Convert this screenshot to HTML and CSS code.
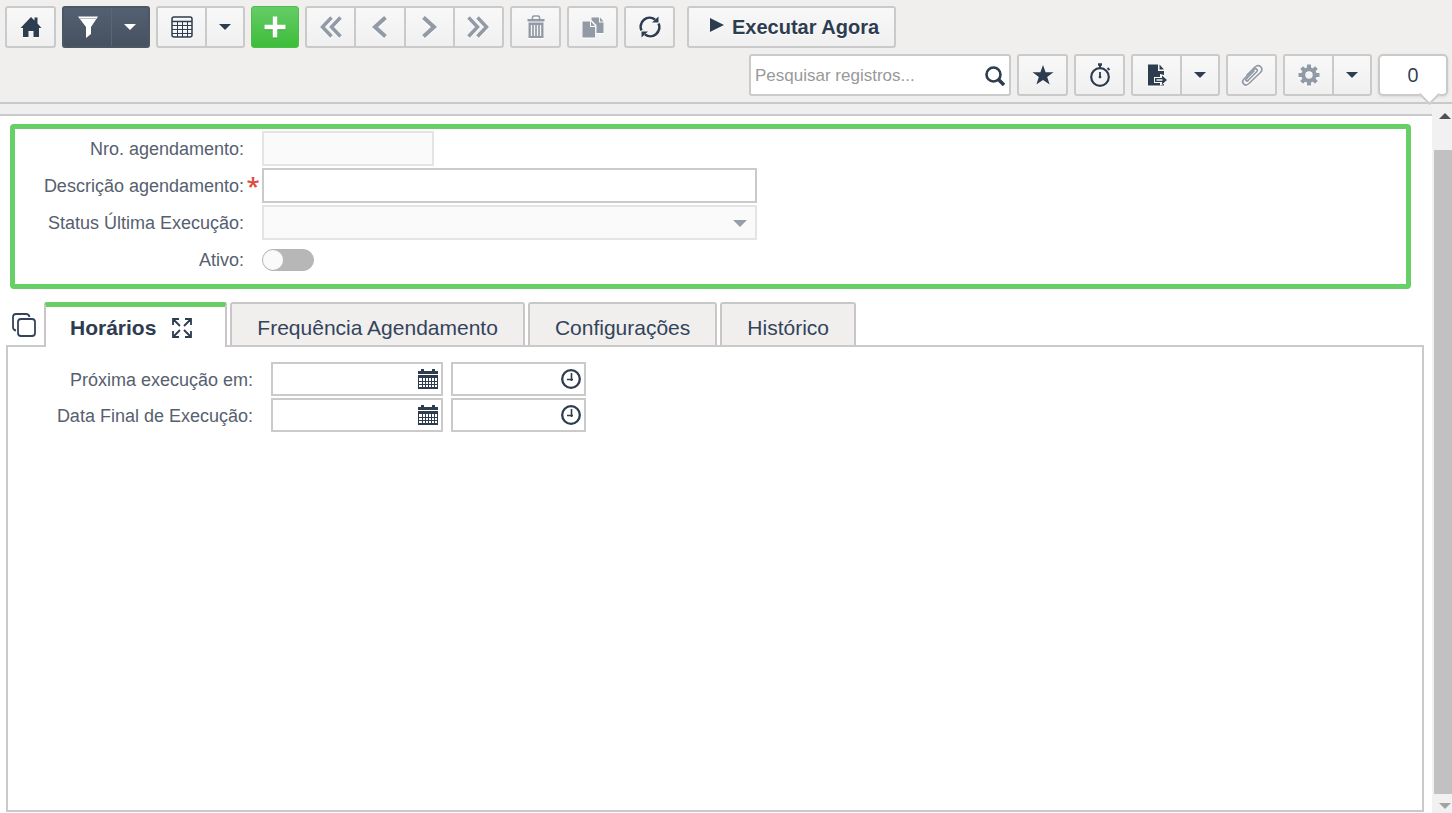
FILE: index.html
```html
<!DOCTYPE html>
<html lang="pt-BR">
<head>
    <meta charset="UTF-8">
    <meta name="viewport" content="width=device-width, initial-scale=1.0">
    <title>Agendamento</title>
    <link rel="stylesheet" href="styles.css">
</head>
<body>
    <!-- Shared icons -->
    <svg class="sprite" aria-hidden="true">
        <symbol id="caret" viewBox="0 0 12 6"><path d="M0 0h12L6 6z" fill="currentColor"/></symbol>
        <symbol id="calendar" viewBox="0 0 20 20">
            <path d="M0 2h3V0h3v2h8V0h3v2h3v3H0z" fill="currentColor"/>
            <path d="M0 6h20v14H0z" fill="currentColor"/>
            <path d="M1 9h3v3H1zm4 0h2v3H5zm3 0h2v3H8zm3 0h2v3h-2zm3 0h2v3h-2zm3 0h2v3h-2zM1 13h3v2H1zm4 0h2v2H5zm3 0h2v2H8zm3 0h2v2h-2zm3 0h2v2h-2zm3 0h2v2h-2zM1 16h3v2H1zm4 0h2v2H5zm3 0h2v2H8zm3 0h2v2h-2zm3 0h2v2h-2zm3 0h2v2h-2z" fill="#fff"/>
        </symbol>
        <symbol id="clock" viewBox="0 0 20 20">
            <circle cx="10" cy="10" r="8.800" fill="none" stroke="currentColor" stroke-width="2.300"/>
            <path d="M10.500 4v8M6 10.500h6" fill="none" stroke="currentColor" stroke-width="1.600"/>
        </symbol>
    </svg>

    <header class="toolbar">
        <div class="toolbar-row">
            <div class="group">
                <button type="button" class="btn" aria-label="Início">
                    <svg class="icon" viewBox="0 0 22 22"><path d="M11 1l3.500 3.500V1.500h3V7.500l4 4.500H19v9h-5.500v-6h-5v6H3v-9H.5z" fill="currentColor"/></svg>
                </button>
            </div>
            <div class="group group-dark">
                <button type="button" class="btn" aria-label="Filtro">
                    <svg class="icon" viewBox="0 0 22 22"><path d="M1 .5h20l-7 10.500v7l-5 4V11z" fill="currentColor"/><path d="M3 2.500h16" stroke="#b9bec6" stroke-width="1"/></svg>
                </button>
                <button type="button" class="btn btn-caret" aria-label="Opções de filtro">
                    <svg class="caret"><use href="#caret"/></svg>
                </button>
            </div>
            <div class="group">
                <button type="button" class="btn" aria-label="Grade">
                    <svg class="icon" viewBox="0 0 22 22" fill="none" stroke="currentColor">
                        <rect x="1" y="1" width="20" height="20" rx="2" stroke-width="1.500"/>
                        <path d="M1 5.500h20" stroke-width="1.500"/>
                        <path d="M1 9.500h20M1 13.500h20M1 17.500h20M6.500 6v15M11.500 6v15M16.500 6v15" stroke-width="1"/>
                    </svg>
                </button>
                <button type="button" class="btn btn-caret" aria-label="Opções da grade">
                    <svg class="caret"><use href="#caret"/></svg>
                </button>
            </div>
            <button type="button" class="btn-add" aria-label="Novo">
                <svg class="icon" viewBox="0 0 22 22"><path d="M11 .5v21M.5 11h21" stroke="currentColor" stroke-width="4.500"/></svg>
            </button>
            <div class="group group-nav">
                <button type="button" class="btn" aria-label="Primeiro" disabled>
                    <svg class="icon" viewBox="0 0 22 22" fill="none" stroke="currentColor" stroke-width="3.500"><path d="M11.500 1.500L2.500 11l9 9.500M20.500 1.500L11.500 11l9 9.500"/></svg>
                </button>
                <button type="button" class="btn" aria-label="Anterior" disabled>
                    <svg class="icon" viewBox="0 0 22 22" fill="none" stroke="currentColor" stroke-width="4"><path d="M16.500 1.500L6 11l10.500 9.500"/></svg>
                </button>
                <button type="button" class="btn" aria-label="Próximo" disabled>
                    <svg class="icon" viewBox="0 0 22 22" fill="none" stroke="currentColor" stroke-width="4"><path d="M5.500 1.500L16 11 5.500 20.500"/></svg>
                </button>
                <button type="button" class="btn" aria-label="Último" disabled>
                    <svg class="icon" viewBox="0 0 22 22" fill="none" stroke="currentColor" stroke-width="3.500"><path d="M1.500 1.500l9 9.500-9 9.500M10.500 1.500l9 9.500-9 9.500"/></svg>
                </button>
            </div>
            <div class="group">
                <button type="button" class="btn" aria-label="Excluir" disabled>
                    <svg class="icon icon-lg" viewBox="0 0 24 24"><path d="M8.500 4V2.500Q8.500 1 10 1h4q1.500 0 1.500 1.500V4" fill="none" stroke="currentColor" stroke-width="1.600"/><path d="M3.500 4h17v2.500h-17zM4.500 7.500h15V23h-15z" fill="currentColor"/><path d="M7.500 10v11M10.500 10v11M13.500 10v11M16.500 10v11" stroke="#f4f4f4" stroke-width="1.300"/></svg>
                </button>
            </div>
            <div class="group">
                <button type="button" class="btn" aria-label="Duplicar" disabled>
                    <svg class="icon" viewBox="0 0 22 22" fill="currentColor"><path d="M9.500 1.500H17v5h4.500V17h-7V9l-5-5zM18 1.500l3.500 4H18z"/><path d="M.5 5.500H8v5.500h5v10.500H.5zM9 5.500l4 4.500H9z"/></svg>
                </button>
            </div>
            <div class="group">
                <button type="button" class="btn" aria-label="Atualizar">
                    <svg class="icon" viewBox="0 0 22 22"><path d="M2.500 14.500A9 9 0 0 1 16 3.500M19.500 7.500A9 9 0 0 1 6 18.500" fill="none" stroke="currentColor" stroke-width="2.600"/><path d="M13 6.500h6.500V.5zM9 15.500H2.500v6z" fill="currentColor"/></svg>
                </button>
            </div>
            <div class="group group-run">
                <button type="button" class="btn btn-run">
                    <svg class="play" viewBox="0 0 14 14"><path d="M0 0l14 7-14 7z" fill="currentColor"/></svg>
                    Executar Agora
                </button>
            </div>
        </div>

        <div class="toolbar-row toolbar-right">
            <div class="search">
                <input type="text" class="search-input" placeholder="Pesquisar registros..." aria-label="Pesquisar registros">
                <button type="button" class="search-btn" aria-label="Pesquisar">
                    <svg class="icon-sm" viewBox="0 0 20 20" fill="none" stroke="currentColor"><circle cx="8.500" cy="8.500" r="7" stroke-width="2.600"/><path d="M13 13l6 6" stroke-width="3.500"/></svg>
                </button>
            </div>
            <div class="group">
                <button type="button" class="btn" aria-label="Favorito">
                    <svg class="icon" viewBox="0 0 22 22"><path d="M11 1l2.600 7.300h7.900l-6.300 4.600 2.400 7.600L11 16l-6.600 4.500 2.400-7.600L.5 8.300h7.900z" fill="currentColor"/></svg>
                </button>
            </div>
            <div class="group">
                <button type="button" class="btn" aria-label="Cronômetro">
                    <svg class="icon icon-lg" viewBox="0 0 24 24" fill="none" stroke="currentColor"><circle cx="12" cy="14" r="8.800" stroke-width="2.200"/><path d="M12 9v6" stroke-width="1.800"/><path d="M10 1.500h4" stroke-width="2.500"/><path d="M12 2v3" stroke-width="2"/><path d="M19.500 5l2 2" stroke-width="1.800"/><circle cx="12" cy="14" r="1" fill="currentColor"/></svg>
                </button>
            </div>
            <div class="group">
                <button type="button" class="btn" aria-label="Exportar">
                    <svg class="icon" viewBox="0 0 22 22"><path d="M2 .5h10V7h6v4l-4-1v3H8v6h6v2.500H2zM13.500.5L18 5.500h-4.500z" fill="currentColor"/><path d="M9 14h7v-2.500l5 4.500-5 4.500V18H9z" fill="currentColor"/><path d="M10.500 16h6" stroke="#f4f4f4" stroke-width="1.500"/><path d="M14 21.500h4V20z" fill="currentColor"/></svg>
                </button>
                <button type="button" class="btn btn-caret" aria-label="Opções de exportação">
                    <svg class="caret"><use href="#caret"/></svg>
                </button>
            </div>
            <div class="group">
                <button type="button" class="btn" aria-label="Anexos" disabled>
                    <svg class="icon icon-lg" viewBox="0 0 24 24" fill="none" stroke="currentColor" stroke-width="1.700" stroke-linecap="round"><path d="M8 17.500l8.500-8.500c2-2.200-.6-4.600-2.700-2.500L4 16c-3.500 3.800 1 8.200 5 4.500L20.500 9.500c4-4.200-1.500-9.300-5.700-5.200L7 12"/><path d="M8 17.500c-1.500 1.200-3-.2-1.800-1.700L14 8"/></svg>
                </button>
            </div>
            <div class="group">
                <button type="button" class="btn" aria-label="Configurações" disabled>
                    <svg class="icon" viewBox="0 0 22 22" fill="none" stroke="currentColor"><circle cx="11" cy="11" r="5.700" stroke-width="4"/><path d="M11 .5V4M11 18v3.500M.5 11H4M18 11h3.500M3.600 3.600L6 6M16 16l2.400 2.400M3.600 18.400L6 16M16 6l2.400-2.400" stroke-width="4"/></svg>
                </button>
                <button type="button" class="btn btn-caret" aria-label="Mais opções">
                    <svg class="caret"><use href="#caret"/></svg>
                </button>
            </div>
            <button type="button" class="counter">0</button>
        </div>
    </header>

    <div class="page">
        <main class="content">
            <div class="strip"></div>

            <form class="header-form">
                <div class="form-row">
                    <label for="numero">Nro. agendamento:</label>
                    <span class="mark"></span>
                    <input type="text" id="numero" class="field field-short" disabled>
                </div>
                <div class="form-row">
                    <label for="descricao">Descrição agendamento:</label>
                    <span class="mark">*</span>
                    <input type="text" id="descricao" class="field" required>
                </div>
                <div class="form-row">
                    <label for="status">Status Última Execução:</label>
                    <span class="mark"></span>
                    <div class="field-wrap">
                        <select id="status" class="field" disabled><option></option></select>
                        <svg class="select-arrow" viewBox="0 0 12 6" preserveAspectRatio="none"><path d="M0 0h12L6 6z" fill="currentColor"/></svg>
                    </div>
                </div>
                <div class="form-row">
                    <label for="ativo">Ativo:</label>
                    <span class="mark"></span>
                    <input type="checkbox" id="ativo" class="switch">
                </div>
            </form>

            <nav class="tabs">
                <button type="button" class="tabs-mode" aria-label="Modo das abas">
                    <svg viewBox="0 0 24 26" fill="none" stroke="currentColor" stroke-width="1.800"><rect x="6" y="7" width="17" height="17" rx="3"/><path d="M4 18.500Q1 18 1 15V5q0-3 3-3h10q3 0 3.500 3"/></svg>
                </button>
                <button type="button" class="tab active">
                    Horários
                    <svg class="expand" viewBox="0 0 20 20" fill="none" stroke="currentColor" stroke-width="1.800"><path d="M1 7V1h6M13 1h6v6M19 13v6h-6M7 19H1v-6M1.500 1.500L8 8M18.500 1.500L12 8M18.500 18.500L12 12M1.500 18.500L8 12"/></svg>
                </button>
                <button type="button" class="tab">Frequência Agendamento</button>
                <button type="button" class="tab">Configurações</button>
                <button type="button" class="tab">Histórico</button>
            </nav>

            <section class="panel">
                <div class="date-row">
                    <label for="proxima">Próxima execução em:</label>
                    <div class="field-wrap date">
                        <input type="text" id="proxima" class="field">
                        <svg class="field-icon"><use href="#calendar"/></svg>
                    </div>
                    <div class="field-wrap time">
                        <input type="text" class="field" aria-label="Hora da próxima execução">
                        <svg class="field-icon"><use href="#clock"/></svg>
                    </div>
                </div>
                <div class="date-row">
                    <label for="final">Data Final de Execução:</label>
                    <div class="field-wrap date">
                        <input type="text" id="final" class="field">
                        <svg class="field-icon"><use href="#calendar"/></svg>
                    </div>
                    <div class="field-wrap time">
                        <input type="text" class="field" aria-label="Hora final de execução">
                        <svg class="field-icon"><use href="#clock"/></svg>
                    </div>
                </div>
            </section>
        </main>

        <div class="scrollbar" aria-hidden="true">
            <svg class="scroll-up"><use href="#caret"/></svg>
            <div class="thumb"></div>
            <svg class="scroll-down"><use href="#caret"/></svg>
        </div>
    </div>
</body>
</html>
```
FILE: styles.css
```css
* {
    box-sizing: border-box;
    margin: 0;
    padding: 0;
    font-family: "Liberation Sans", Arial, sans-serif;
}

body {
    display: flex;
    flex-direction: column;
    height: 100vh;
    background-color: #fff;
    color: #2d3c4f;
    font-size: 18px;
    overflow: hidden;
}

svg {
    display: block;
    flex: none;
}

.sprite {
    position: absolute;
    width: 0;
    height: 0;
}

/* Toolbar */
.toolbar {
    display: flex;
    flex-direction: column;
    gap: 6px;
    padding: 6px 4px 6px 5px;
    background-color: #f0efee;
    border-bottom: 2px solid #c9c9c9;
}

.toolbar-row {
    display: flex;
    gap: 6px;
    height: 42px;
}

.toolbar-right {
    justify-content: flex-end;
}

.group {
    display: flex;
    border: 2px solid #cacaca;
    border-radius: 3px;
    background: linear-gradient(#f8f8f8, #f0f0f0);
}

.btn {
    display: flex;
    align-items: center;
    justify-content: center;
    width: 47px;
    border: none;
    background: none;
    color: #2d3c4f;
    cursor: pointer;
}

.btn svg {
    filter: drop-shadow(0 1px 0 #fff);
}

.btn:disabled {
    color: #929aa6;
    cursor: default;
}

.btn + .btn {
    border-left: 2px solid #cacaca;
}

.btn-caret {
    width: 38px;
}

.icon {
    width: 22px;
    height: 22px;
}

.icon-lg {
    width: 24px;
    height: 24px;
}

.icon-sm {
    width: 20px;
    height: 20px;
}

.caret {
    width: 12px;
    height: 6px;
}

.group-dark {
    border-color: #4c5766;
    background: linear-gradient(#546071, #465160);
}

.group-dark .btn {
    color: #fff;
}

.group-dark .btn + .btn {
    width: 37px;
    border-color: #5a6575;
    border-left-width: 1px;
}

.group-dark .btn svg {
    filter: none;
}

.btn-add {
    display: flex;
    align-items: center;
    justify-content: center;
    width: 48px;
    border: 1px solid #4cbf4a;
    border-radius: 3px;
    background: linear-gradient(#66cc66, #3dbd3a);
    color: #fff;
    cursor: pointer;
}

.btn-add svg {
    filter: drop-shadow(0 1px 0 #3a9c38);
}

.group-nav {
    width: 199px;
}

.group-nav .btn {
    flex: 1;
}

.group-run {
    margin-left: 6px;
}

.btn-run {
    width: auto;
    gap: 8px;
    padding: 0 15px 0 21px;
    font-size: 20px;
    font-weight: bold;
    text-shadow: 0 1px 0 #fff;
}

.play {
    width: 14px;
    height: 14px;
    margin-bottom: 4px;
}

.search {
    display: flex;
    align-items: center;
    width: 262px;
    border: 2px solid #cacaca;
    border-radius: 3px;
    background-color: #fff;
}

.search-input {
    flex: 1;
    min-width: 0;
    height: 100%;
    padding: 2px 0 0 4px;
    border: none;
    outline: none;
    background: none;
    font-size: 17px;
}

.search-input::placeholder {
    color: #999;
}

.search-btn {
    padding: 6px 4px 4px;
    border: none;
    background: none;
    color: #2d3c4f;
    cursor: pointer;
}

.counter {
    position: relative;
    width: 70px;
    padding-bottom: 2px;
    border: 2px solid #cacaca;
    border-radius: 5px;
    background-color: #fff;
    box-shadow: 0 1px 3px rgba(0, 0, 0, 0.1);
    color: #2d3c4f;
    font-family: "Open Sans", sans-serif;
    font-size: 20px;
    cursor: pointer;
}

.counter::after {
    content: '';
    position: absolute;
    right: 9px;
    bottom: -8px;
    width: 13px;
    height: 13px;
    border: solid #cacaca;
    border-width: 0 2px 2px 0;
    background-color: #fff;
    transform: rotate(45deg);
}

/* Page */
.page {
    display: flex;
    flex: 1;
    min-height: 0;
}

.content {
    display: flex;
    flex: 1;
    flex-direction: column;
    min-width: 0;
    padding-bottom: 1px;
}

.strip {
    height: 12px;
    background-color: #efefef;
    border-bottom: 2px solid #cacaca;
}

label {
    padding-top: 2px;
    color: #56606f;
    text-align: right;
}

.header-form {
    display: flex;
    flex-direction: column;
    gap: 2px;
    margin: 8px 21px 13px 10px;
    padding: 2px 0 7px;
    border: 5px solid #66cf66;
    border-radius: 4px;
}

.form-row {
    display: flex;
    align-items: center;
    height: 35px;
}

.form-row label {
    width: 229px;
}

.mark {
    width: 18px;
    color: #dc4b3c;
    font-family: "Open Sans", sans-serif;
    font-size: 24px;
    font-weight: 600;
    line-height: 30px;
    text-align: center;
}

.field {
    display: block;
    width: 495px;
    height: 35px;
    padding: 0 8px;
    border: 2px solid #cacaca;
    border-radius: 0;
    outline: none;
    background-color: #fff;
    font-size: 18px;
    appearance: none;
}

.field:disabled {
    border-color: #e4e4e4;
    background-color: #fafafa;
    opacity: 1;
}

.field-short {
    width: 172px;
}

.field-wrap {
    position: relative;
}

.select-arrow {
    position: absolute;
    top: 15px;
    right: 10px;
    width: 14px;
    height: 7px;
    color: #969eaa;
    pointer-events: none;
}

.switch {
    display: flex;
    width: 52px;
    height: 22px;
    border: 1px solid #b5b5b5;
    border-radius: 11px;
    background-color: #b7b7b7;
    appearance: none;
    cursor: pointer;
}

.switch::before {
    content: '';
    width: 20px;
    height: 20px;
    border-radius: 50%;
    background-color: #fafafa;
}

.switch:checked {
    justify-content: flex-end;
    background-color: #66cf66;
}

/* Tabs */
.tabs {
    display: flex;
    gap: 3px;
    height: 43px;
    padding-left: 6px;
}

.tabs-mode {
    display: flex;
    align-items: center;
    justify-content: center;
    width: 35px;
    padding-top: 2px;
    border: none;
    background: none;
    color: #34435a;
    cursor: pointer;
}

.tabs-mode svg {
    width: 24px;
    height: 26px;
}

.tab {
    display: flex;
    align-items: center;
    padding: 7px 25px 0;
    border: 2px solid #cac6c7;
    border-bottom: none;
    border-radius: 3px 3px 0 0;
    background-color: #f0efee;
    color: #34435a;
    font-size: 21px;
    cursor: pointer;
}

.tab.active {
    gap: 16px;
    height: 45px;
    padding: 2px 33px 0 24px;
    border-top: 5px solid #66cf66;
    background-color: #fff;
    color: #2d3c4f;
    font-weight: bold;
    z-index: 1;
}

.expand {
    width: 20px;
    height: 20px;
}

.panel {
    display: flex;
    flex: 1;
    flex-direction: column;
    gap: 2px;
    margin: 0 8px 0 6px;
    padding-top: 15px;
    border: 2px solid #cacaca;
}

.date-row {
    display: flex;
    align-items: center;
}

.date-row label {
    width: 245px;
    margin-right: 18px;
}

.date-row .field {
    width: 100%;
    height: 34px;
}

.date {
    width: 172px;
    margin-right: 8px;
}

.time {
    width: 135px;
}

.field-icon {
    position: absolute;
    top: 7px;
    right: 5px;
    width: 20px;
    height: 20px;
    color: #2d3c4f;
    pointer-events: none;
}

/* Scrollbar */
.scrollbar {
    display: flex;
    flex-direction: column;
    align-items: center;
    width: 20px;
    padding: 9px 0 4px 2px;
    background-color: #f1f1f1;
}

.scroll-up,
.scroll-down {
    width: 12px;
    height: 6px;
    margin-left: 3px;
    color: #505050;
}

.scroll-up {
    transform: rotate(180deg);
}

.scroll-down {
    color: #a3a3a3;
}

.thumb {
    flex: 1;
    width: 18px;
    margin: 31px 0 9px;
    background-color: #c1c1c1;
}
```
